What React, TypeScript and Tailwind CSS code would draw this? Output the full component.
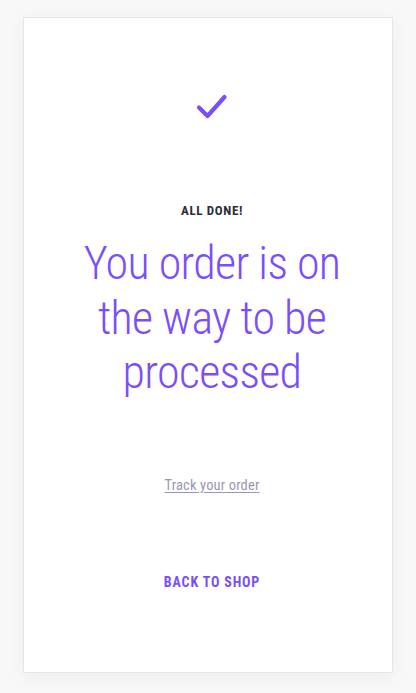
export default function App() {
  return (
    <div className="min-h-[693px] w-[416px] bg-[#f8f8f8] pt-[17px]">
      <div className="mx-auto flex h-[656px] w-[370px] flex-col items-center border border-[#e6e6e6] bg-white pl-2 font-['Roboto_Condensed','Roboto',sans-serif] shadow-[0_4px_16px_rgba(0,0,0,0.05)]">
        <svg width="32" height="26" viewBox="0 0 32 26" className="mt-[76px]" fill="none">
          <path
            d="M3 13.5 L11.5 22 L28.5 3"
            stroke="#7a4ffb"
            strokeWidth="4.2"
            strokeLinecap="round"
            strokeLinejoin="round"
          />
        </svg>
        <p className="mt-[84px] text-[13px] font-bold leading-none tracking-[0.05em] text-[#2e2d3b]">
          ALL DONE!
        </p>
        <h1 className="mt-[19px] w-[300px] text-center text-[46px] font-light leading-[54.5px] tracking-[-0.015em] text-[#7a4ffb]">
          You order is on the way to be processed
        </h1>
        <a
          href="#"
          className="mt-[79px] text-[14.5px] leading-none tracking-[0.01em] text-[#9a96b6] underline underline-offset-2"
        >
          Track your order
        </a>
        <a
          href="#"
          className="mt-[82px] text-[14px] font-bold leading-none tracking-[0.06em] text-[#7a4ffb]"
        >
          BACK TO SHOP
        </a>
      </div>
    </div>
  );
}
